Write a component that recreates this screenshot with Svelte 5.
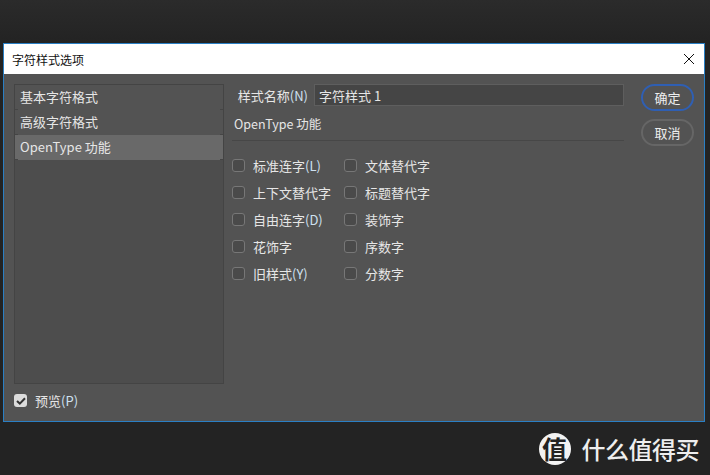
<script>
  const tabs = ['基本字符格式', '高级字符格式', 'OpenType 功能'];
  const left = [
    { label: '标准连字', key: '(L)' },
    { label: '上下文替代字' },
    { label: '自由连字', key: '(D)' },
    { label: '花饰字' },
    { label: '旧样式', key: '(Y)' }
  ];
  const right = ['文体替代字', '标题替代字', '装饰字', '序数字', '分数字'];
</script>

<div class="page">
  <div class="dialog">
    <div class="titlebar">
      <span class="title">字符样式选项</span>
      <svg class="close" width="12" height="12" viewBox="0 0 12 12">
        <path d="M1 1 L11 11 M11 1 L1 11" stroke="#111" stroke-width="1" fill="none" />
      </svg>
    </div>
    <div class="body">
      <div class="sidebar">
        <div class="list">
          {#each tabs as tab, i}
            <div class="tab" class:selected={i === 2}>{tab}</div>
          {/each}
        </div>
        <label class="preview">
          <span class="box checked">
            <svg width="10" height="8" viewBox="0 0 10 8">
              <path d="M1 4 L3.8 6.6 L9 1.2" stroke="#333" stroke-width="2" fill="none" />
            </svg>
          </span>
          <span>预览<span class="key">(P)</span></span>
        </label>
      </div>

      <div class="main">
        <div class="name-row">
          <span class="name-label">样式名称<span class="key">(N)</span></span>
          <div class="name-input">字符样式 1</div>
        </div>
        <div class="section">OpenType 功能</div>
        <div class="options">
          <div class="col col-left">
            {#each left as o}
              <div class="opt">
                <span class="box"></span>
                <span>{o.label}{#if o.key}<span class="key">{o.key}</span>{/if}</span>
              </div>
            {/each}
          </div>
          <div class="col">
            {#each right as o}
              <div class="opt">
                <span class="box"></span>
                <span>{o}</span>
              </div>
            {/each}
          </div>
        </div>
      </div>

      <div class="buttons">
        <button type="button" class="btn primary">确定</button>
        <button type="button" class="btn">取消</button>
      </div>
    </div>
  </div>

  <div class="brand">
    <span class="logo">值</span>
    <span class="brand-name">什么值得买</span>
  </div>
</div>

<style>
  :global(body) {
    margin: 0;
    background: #222;
  }

  .page {
    width: 710px;
    height: 475px;
    box-sizing: border-box;
    padding: 43px 5px 0 3px;
    overflow: hidden;
    background: linear-gradient(to bottom, #2b2b2b 0, #232323 43px);
    font-family: "Noto Sans CJK SC", "Liberation Sans", sans-serif;
    font-size: 13px;
    color: #e6e6e6;
  }

  .dialog {
    height: 379px;
    box-sizing: border-box;
    border: 1px solid #2a7fc4;
    display: flex;
    flex-direction: column;
  }

  .titlebar {
    height: 30px;
    flex: none;
    background: #fff;
    display: flex;
    align-items: center;
    justify-content: space-between;
    padding: 0 9px 0 8px;
    color: #111;
  }

  .title {
    font-size: 12px;
  }

  .body {
    flex: 1;
    display: flex;
    background: #535353;
    padding: 10px 10px 0 10px;
  }

  .sidebar {
    width: 210px;
    flex: none;
  }

  .list {
    height: 300px;
    box-sizing: border-box;
    border: 1px solid #444;
    background: #4d4d4d;
  }

  .tab {
    position: relative;
    height: 25px;
    line-height: 24px;
    padding-left: 5px;
    box-sizing: border-box;
    background: #535353;
  }

  /* little notches at the row ends */
  .tab::before,
  .tab::after {
    content: '';
    position: absolute;
    bottom: 0;
    width: 3px;
    height: 1px;
    background: #454545;
  }

  .tab::before {
    left: 0;
  }

  .tab::after {
    right: 0;
  }

  .tab.selected {
    background: #696969;
  }

  .preview {
    display: flex;
    align-items: center;
    gap: 8px;
    margin-top: 7px;
  }

  .box {
    width: 11px;
    height: 11px;
    flex: none;
    border: 1px solid #777;
    border-radius: 3px;
    background: #4a4a4a;
    display: flex;
    align-items: center;
    justify-content: center;
  }

  .box.checked {
    width: 13px;
    height: 13px;
    border: none;
    background: #dcdcdc;
  }

  .key {
    color: #cfe0f0;
  }

  .main {
    width: 392px;
    flex: none;
    margin-left: 8px;
  }

  .name-row {
    display: flex;
    align-items: center;
    height: 22px;
  }

  .name-label {
    width: 82px;
    flex: none;
    text-align: right;
    padding-right: 6px;
    box-sizing: border-box;
  }

  .name-input {
    flex: 1;
    height: 22px;
    line-height: 21px;
    box-sizing: border-box;
    border: 1px solid #5e5e5e;
    background: #454545;
    padding-left: 4px;
  }

  .section {
    margin-top: 8px;
    height: 26px;
    line-height: 20px;
    padding-left: 2px;
    border-bottom: 1px solid #474747;
    font-size: 12.5px;
  }

  .options {
    display: flex;
    margin-top: 14px;
  }

  .col {
    display: flex;
    flex-direction: column;
    gap: 7px;
  }

  .col-left {
    width: 112px;
  }

  .opt {
    height: 20px;
    display: flex;
    align-items: center;
    gap: 8px;
  }

  .buttons {
    margin-left: 17px;
    display: flex;
    flex-direction: column;
    gap: 8px;
  }

  .btn {
    width: 53px;
    height: 27px;
    padding: 0;
    box-sizing: border-box;
    border: 2px solid #666;
    border-radius: 14px;
    background: #535353;
    color: #eee;
    font: inherit;
  }

  .btn.primary {
    border-color: #2f5fb3;
  }

  .brand {
    display: flex;
    align-items: center;
    justify-content: flex-end;
    gap: 11px;
    margin-top: 9px;
    padding-right: 6px;
  }

  .logo {
    width: 32px;
    height: 32px;
    border-radius: 50%;
    background: #f2f2f2;
    color: #222;
    font-size: 25px;
    font-weight: 700;
    line-height: 31px;
    text-align: center;
  }

  .brand-name {
    font-size: 24px;
    font-weight: 500;
    letter-spacing: -0.5px;
    line-height: 36px;
    color: #eee;
  }
</style>
